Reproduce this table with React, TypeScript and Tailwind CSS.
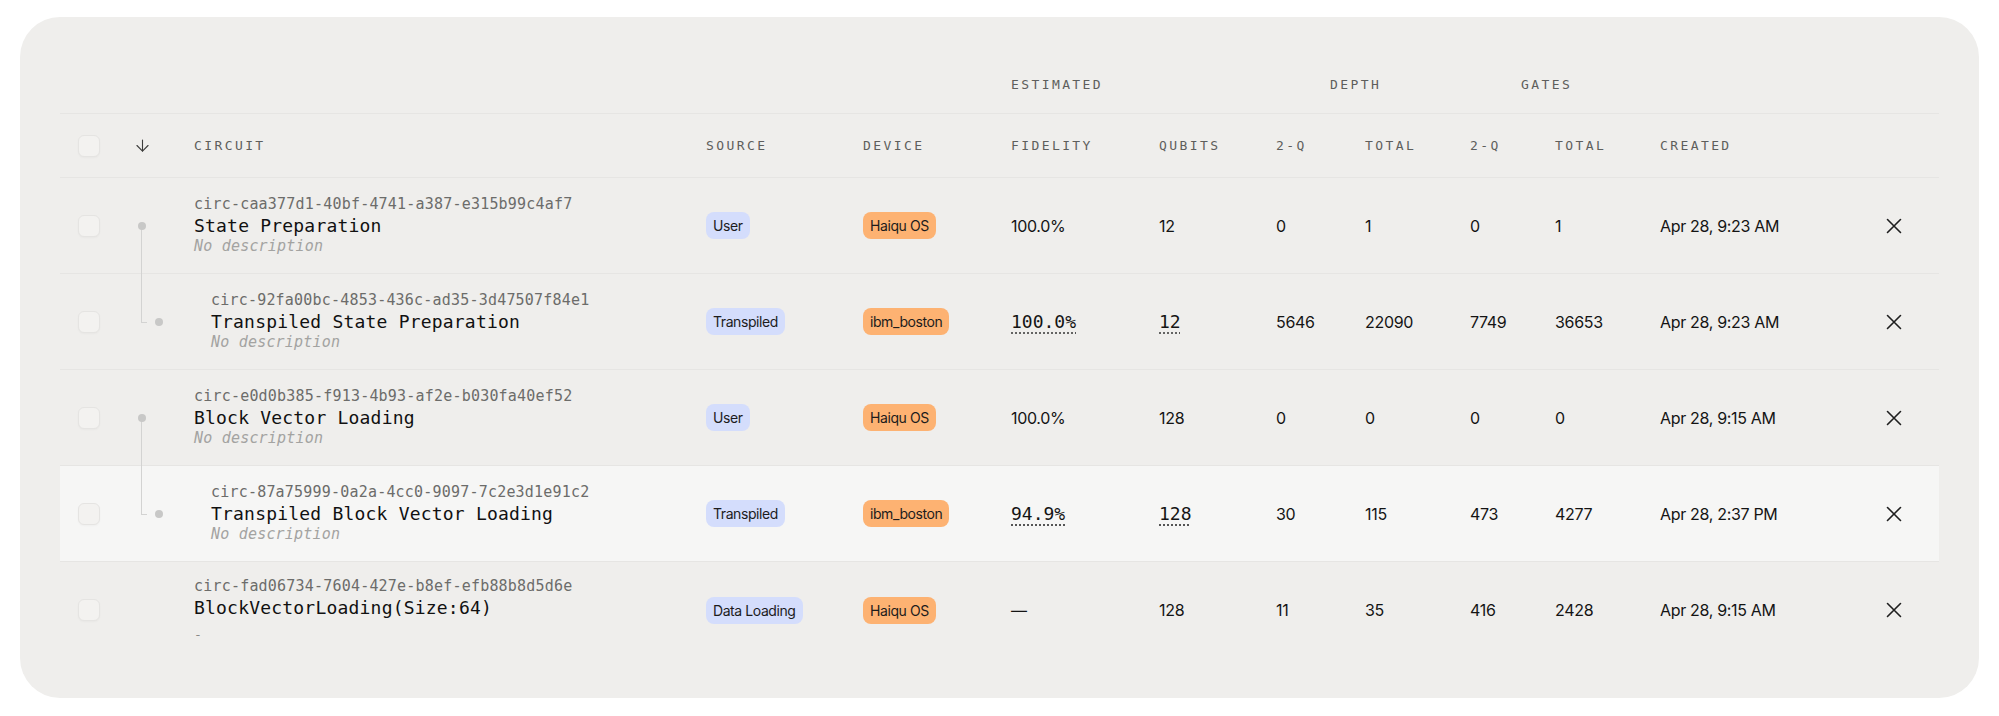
import { ArrowDown } from 'lucide-react'

type Row = {
  id: string
  name: string
  desc: string
  source: string
  device: string
  fidelity: string
  qubits: string
  d2: string
  dt: string
  g2: string
  gt: string
  created: string
  tree?: 'parent' | 'child'
  active?: boolean
}

const rows: Row[] = [
  {
    id: 'circ-caa377d1-40bf-4741-a387-e315b99c4af7',
    name: 'State Preparation',
    desc: 'No description',
    source: 'User',
    device: 'Haiqu OS',
    fidelity: '100.0%',
    qubits: '12',
    d2: '0',
    dt: '1',
    g2: '0',
    gt: '1',
    created: 'Apr 28, 9:23 AM',
    tree: 'parent',
  },
  {
    id: 'circ-92fa00bc-4853-436c-ad35-3d47507f84e1',
    name: 'Transpiled State Preparation',
    desc: 'No description',
    source: 'Transpiled',
    device: 'ibm_boston',
    fidelity: '100.0%',
    qubits: '12',
    d2: '5646',
    dt: '22090',
    g2: '7749',
    gt: '36653',
    created: 'Apr 28, 9:23 AM',
    tree: 'child',
  },
  {
    id: 'circ-e0d0b385-f913-4b93-af2e-b030fa40ef52',
    name: 'Block Vector Loading',
    desc: 'No description',
    source: 'User',
    device: 'Haiqu OS',
    fidelity: '100.0%',
    qubits: '128',
    d2: '0',
    dt: '0',
    g2: '0',
    gt: '0',
    created: 'Apr 28, 9:15 AM',
    tree: 'parent',
  },
  {
    id: 'circ-87a75999-0a2a-4cc0-9097-7c2e3d1e91c2',
    name: 'Transpiled Block Vector Loading',
    desc: 'No description',
    source: 'Transpiled',
    device: 'ibm_boston',
    fidelity: '94.9%',
    qubits: '128',
    d2: '30',
    dt: '115',
    g2: '473',
    gt: '4277',
    created: 'Apr 28, 2:37 PM',
    tree: 'child',
    active: true,
  },
  {
    id: 'circ-fad06734-7604-427e-b8ef-efb88b8d5d6e',
    name: 'BlockVectorLoading(Size:64)',
    desc: '-',
    source: 'Data Loading',
    device: 'Haiqu OS',
    fidelity: '—',
    qubits: '128',
    d2: '11',
    dt: '35',
    g2: '416',
    gt: '2428',
    created: 'Apr 28, 9:15 AM',
  },
]

const grid =
  'grid grid-cols-[60px_74px_512px_157px_148px_148px_117px_89px_105px_85px_105px_210px_1fr] items-center'

function Checkbox() {
  return <div className="size-[22px] rounded-md border border-[#e5e4e2] bg-[#f3f2f0] shadow-[0_1px_2px_rgba(0,0,0,0.03)]" />
}

function Badge({ label, tone }: { label: string; tone: 'blue' | 'orange' }) {
  return (
    <span
      className={
        tone === 'blue'
          ? "inline-flex h-[27px] items-center rounded-lg bg-[#d4ddfc] px-[7px] font-['Inter'] text-[14px] tracking-[-0.03em] text-[#1c1c1c]"
          : "inline-flex h-[27px] items-center rounded-lg bg-[#fdb272] px-[7px] font-['Inter'] text-[14px] tracking-[-0.03em] text-[#1c1c1c]"
      }
    >
      {label}
    </span>
  )
}

function Tree({ kind }: { kind?: 'parent' | 'child' }) {
  if (kind === 'parent')
    return (
      <div className="relative h-full">
        <div className="absolute left-[21px] top-1/2 bottom-[-1px] w-px bg-[#d3d3d2]" />
        <div className="absolute left-[18px] top-1/2 -mt-1 size-2 rounded-full bg-[#c8c8c7]" />
      </div>
    )
  if (kind === 'child')
    return (
      <div className="relative h-full">
        <div className="absolute left-[21px] top-0 h-1/2 w-px bg-[#d3d3d2]" />
        <div className="absolute left-[21px] top-1/2 h-px w-[6px] bg-[#d3d3d2]" />
        <div className="absolute left-[35px] top-1/2 -mt-1 size-2 rounded-full bg-[#c8c8c7]" />
      </div>
    )
  return <div />
}

function CloseIcon() {
  return (
    <svg width="16" height="16" viewBox="0 0 16 16" fill="none" stroke="#1f1f1f" strokeWidth="1.6" strokeLinecap="round">
      <path d="M1.5 1.5 L14.5 14.5 M14.5 1.5 L1.5 14.5" />
    </svg>
  )
}

const head = "font-['DejaVu_Sans_Mono',monospace] text-[13px] tracking-[2.4px] text-[#5e5e5c]"
const num = "font-['Inter'] text-[16px] tracking-[-0.02em] text-[#141414]"
const monoNum =
  "font-['DejaVu_Sans_Mono',monospace] text-[18px] text-[#141414] underline decoration-dotted decoration-[#555] underline-offset-[5px]"

export default function App() {
  return (
    <main className="min-h-screen bg-white px-5 pt-[17px]">
      <section className="rounded-[40px] bg-[#efeeec] px-10 pt-10 pb-10">
        <div className={`${grid} h-[57px] border-b border-[#e6e5e3]`}>
          <div className={`${head} col-start-6`}>ESTIMATED</div>
          <div className={`${head} col-start-8 col-span-2 pl-[54px]`}>DEPTH</div>
          <div className={`${head} col-start-10 col-span-2 pl-[51px]`}>GATES</div>
        </div>

        <div className={`${grid} h-[64px] border-b border-[#e6e5e3]`}>
          <div className="pl-[18px]">
            <Checkbox />
          </div>
          <div className="pl-[13px] text-[#3c3c3b]">
            <ArrowDown size={19} strokeWidth={1.4} />
          </div>
          <div className={head}>CIRCUIT</div>
          <div className={head}>SOURCE</div>
          <div className={head}>DEVICE</div>
          <div className={head}>FIDELITY</div>
          <div className={head}>QUBITS</div>
          <div className={head}>2-Q</div>
          <div className={head}>TOTAL</div>
          <div className={head}>2-Q</div>
          <div className={head}>TOTAL</div>
          <div className={head}>CREATED</div>
          <div />
        </div>

        {rows.map((r, i) => {
          const transpiled = r.source === 'Transpiled'
          return (
            <div
              key={r.id}
              className={`${grid} h-[96px] ${i < rows.length - 1 ? 'border-b border-[#e6e5e3]' : ''} ${
                r.active ? 'bg-[#f6f6f5]' : ''
              }`}
            >
              <div className="pl-[18px]">
                <Checkbox />
              </div>
              <Tree kind={r.tree} />
              <div className={r.tree === 'child' ? 'pl-[17px]' : ''}>
                <div className="font-['DejaVu_Sans_Mono',monospace] text-[15px] leading-[21px] tracking-[0.2px] text-[#6c6c6a]">
                  {r.id}
                </div>
                <div className="font-['DejaVu_Sans_Mono',monospace] text-[18px] leading-[21px] tracking-[0.2px] text-[#111]">
                  {r.name}
                </div>
                {r.desc === '-' ? (
                  <div className="mt-[6px] font-['DejaVu_Sans_Mono',monospace] text-[13px] leading-[21px] text-[#8a8a88]">-</div>
                ) : (
                  <div className="font-['DejaVu_Sans_Mono',monospace] text-[15px] italic leading-[21px] tracking-[0.2px] text-[#a3a3a1]">
                    {r.desc}
                  </div>
                )}
              </div>
              <div>
                <Badge label={r.source} tone="blue" />
              </div>
              <div>
                <Badge label={r.device} tone="orange" />
              </div>
              <div>
                <span className={transpiled ? monoNum : num}>{r.fidelity}</span>
              </div>
              <div>
                <span className={transpiled ? monoNum : num}>{r.qubits}</span>
              </div>
              <div className={num}>{r.d2}</div>
              <div className={num}>{r.dt}</div>
              <div className={num}>{r.g2}</div>
              <div className={num}>{r.gt}</div>
              <div className={num}>{r.created}</div>
              <div className="pl-[16px]">
                <CloseIcon />
              </div>
            </div>
          )
        })}
      </section>
    </main>
  )
}
